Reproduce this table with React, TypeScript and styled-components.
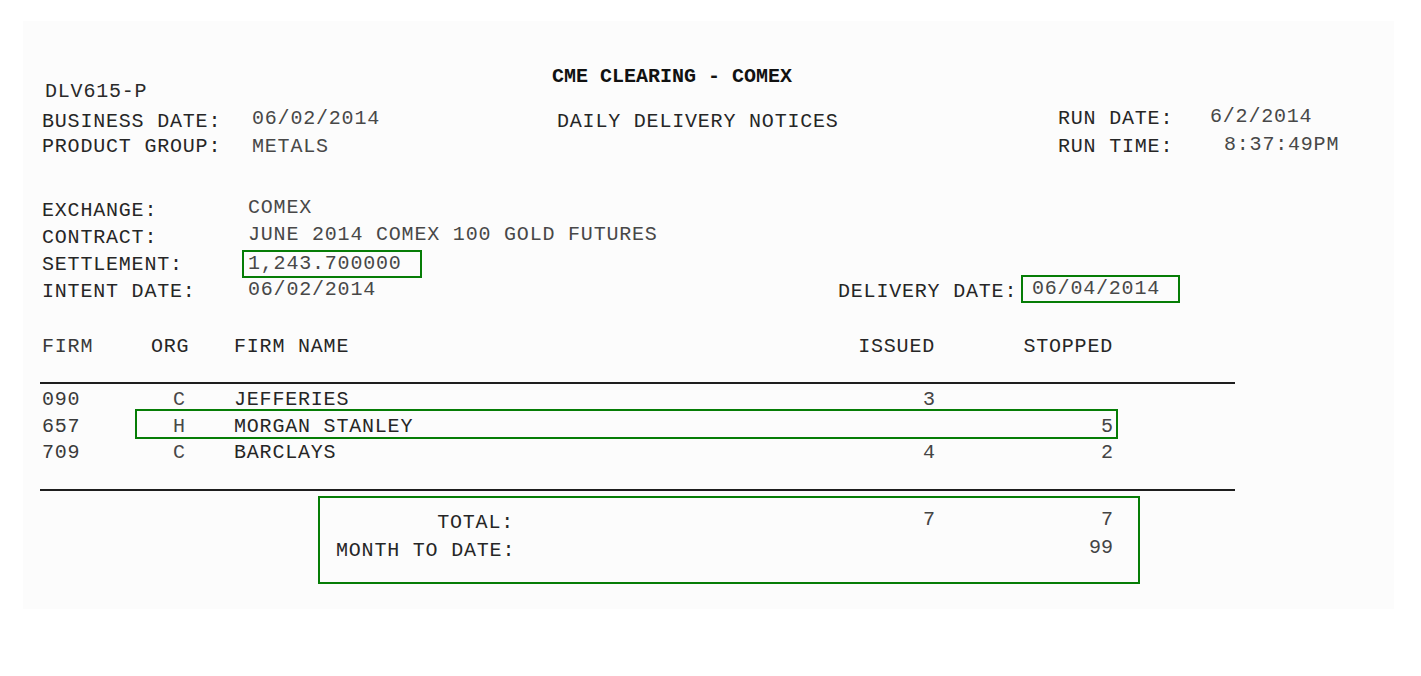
import styled, { createGlobalStyle } from "styled-components";

const GREEN = "#067d06";

function App() {
  return (
    <Page>
      <GlobalStyle />
      <Sheet>
        <TitleLine>CME CLEARING - COMEX</TitleLine>
        <CodeLine>DLV615-P</CodeLine>

        <HeadRow $h={25}>
          <Label>BUSINESS DATE:</Label>
          <Value $up={3}>06/02/2014</Value>
          <Label>DAILY DELIVERY NOTICES</Label>
          <Label $up={3}>RUN DATE:</Label>
          <Value $up={5}>6/2/2014</Value>
        </HeadRow>
        <HeadRow $h={64}>
          <Label>PRODUCT GROUP:</Label>
          <Value>METALS</Value>
          <span />
          <Label>RUN TIME:</Label>
          <Value $up={2} $indent={14}>8:37:49PM</Value>
        </HeadRow>

        <InfoRow $h={27}>
          <Label>EXCHANGE:</Label>
          <Value $up={3}>COMEX</Value>
        </InfoRow>
        <InfoRow $h={27}>
          <Label>CONTRACT:</Label>
          <Value $up={3}>JUNE 2014 COMEX 100 GOLD FUTURES</Value>
        </InfoRow>
        <InfoRow $h={27}>
          <Label>SETTLEMENT:</Label>
          <Marked $shift={6} $padL={4} $top={5}>1,243.700000</Marked>
        </InfoRow>
        <InfoRow $h={55}>
          <Label>INTENT DATE:</Label>
          <Value $up={2}>06/02/2014</Value>
          <Label>DELIVERY DATE:</Label>
          <Marked $shift={11} $padL={9} $top={7}>06/04/2014</Marked>
        </InfoRow>

        <Row $h={20}>
          <Firm>FIRM</Firm>
          <RowBody>
            <Label>ORG</Label>
            <Label>FIRM NAME</Label>
            <Num $head>ISSUED</Num>
            <Num $head>STOPPED</Num>
          </RowBody>
        </Row>
        <Rule $gap={25} />

        {deliveries.map((d, i) => (
          <Row key={d.firm} $h={i === 2 ? 20 : i === 0 ? 27 : 26} $first={i === 0}>
            <Firm>{d.firm}</Firm>
            <RowBody $boxed={d.boxed}>
              <Value $indent={22}>{d.org}</Value>
              <Label>{d.name}</Label>
              <Num>{d.issued}</Num>
              <Num>{d.stopped}</Num>
            </RowBody>
          </Row>
        ))}

        <Rule $gap={26} />

        <TotalsBox>
          <TotalRow>
            <TotalLabel>TOTAL:</TotalLabel>
            <Num $up={3}>7</Num>
            <Num $up={3}>7</Num>
          </TotalRow>
          <TotalRow>
            <TotalLabel>MONTH TO DATE:</TotalLabel>
            <Num $up={3}></Num>
            <Num $up={3}>99</Num>
          </TotalRow>
        </TotalsBox>
      </Sheet>
    </Page>
  );
}

export default App;

const deliveries = [
  { firm: "090", org: "C", name: "JEFFERIES", issued: "3", stopped: "", boxed: false },
  { firm: "657", org: "H", name: "MORGAN STANLEY", issued: "", stopped: "5", boxed: true },
  { firm: "709", org: "C", name: "BARCLAYS", issued: "4", stopped: "2", boxed: false },
];

const GlobalStyle = createGlobalStyle`
  html, body {
    margin: 0;
    padding: 0;
    background: #ffffff;
  }
  body {
    font-family: "Liberation Mono", "Courier New", monospace;
    font-size: 20px;
    letter-spacing: 0.8px;
    color: #222;
  }
`;

const Page = styled.div`
  width: 1421px;
  height: 676px;
  padding: 21px 0 0 23px;
  box-sizing: border-box;
  background: #ffffff;
`;

const Sheet = styled.div`
  width: 1371px;
  height: 588px;
  padding-top: 46px;
  box-sizing: border-box;
  background: #fcfcfc;
  line-height: 20px;
  white-space: pre;
`;

const TitleLine = styled.div`
  height: 15px;
  padding-left: 529px;
  font-weight: 700;
  letter-spacing: 0;
  color: #111;
`;

const CodeLine = styled.div`
  height: 30px;
  padding-left: 22px;
  color: #2a2a2a;
`;

const HeadRow = styled.div<{ $h: number }>`
  display: grid;
  grid-template-columns: 210px 305px 501px 152px 1fr;
  height: ${(p) => p.$h}px;
  padding-left: 19px;
`;

const InfoRow = styled.div<{ $h: number }>`
  display: grid;
  grid-template-columns: 206px 590px 194px 1fr;
  align-items: start;
  height: ${(p) => p.$h}px;
  padding-left: 19px;
`;

const Label = styled.div<{ $up?: number }>`
  color: #262626;
  margin-top: ${(p) => -(p.$up ?? 0)}px;
`;

const Value = styled.div<{ $up?: number; $indent?: number }>`
  color: #484848;
  margin-top: ${(p) => -(p.$up ?? 0)}px;
  padding-left: ${(p) => p.$indent ?? 0}px;
`;

const Marked = styled.div<{ $shift: number; $padL: number; $top: number }>`
  width: fit-content;
  margin-left: -${(p) => p.$shift}px;
  margin-top: -${(p) => p.$top}px;
  padding: 2px 18px 0 ${(p) => p.$padL}px;
  height: 22px;
  border: 2px solid ${GREEN};
  color: #484848;
`;

const Row = styled.div<{ $h: number; $first?: boolean }>`
  display: flex;
  height: ${(p) => p.$h}px;
  padding-left: 19px;
  margin-top: ${(p) => (p.$first ? 6 : 0)}px;
`;

const Firm = styled.div`
  width: 109px;
  flex: none;
  color: #3a3a3a;
`;

const RowBody = styled.div<{ $boxed?: boolean }>`
  display: grid;
  grid-template-columns: 83px 616px 85px 178px;
  align-self: flex-start;
  height: 20px;
  ${(p) =>
    p.$boxed &&
    `
    margin: -8px -5px 0 -16px;
    padding: 6px 3px 0 14px;
    border: 2px solid ${GREEN};
  `}
`;

const Num = styled.div<{ $up?: number; $head?: boolean }>`
  text-align: right;
  letter-spacing: ${(p) => (p.$head ? "0.8px" : "0")};
  color: ${(p) => (p.$head ? "#262626" : "#444")};
  margin-top: ${(p) => -(p.$up ?? 0)}px;
`;

const Rule = styled.div<{ $gap: number }>`
  width: 1195px;
  height: 2px;
  margin: ${(p) => p.$gap}px 0 0 17px;
  background: #1e1e1e;
`;

const TotalsBox = styled.div`
  width: 822px;
  height: 88px;
  margin: 5px 0 0 295px;
  padding: 15px 25px 0 16px;
  box-sizing: border-box;
  border: 2px solid ${GREEN};
`;

const TotalRow = styled.div`
  display: grid;
  grid-template-columns: 178px 421px 178px;
  height: 28px;
`;

const TotalLabel = styled.div`
  text-align: right;
  color: #262626;
`;
